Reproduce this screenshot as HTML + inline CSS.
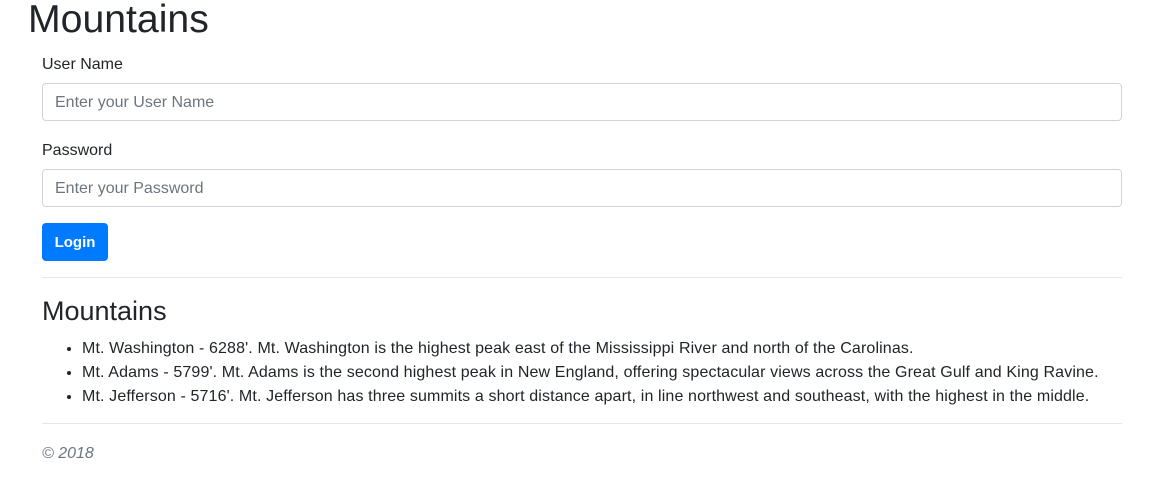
<!DOCTYPE html>
<html><head><style>
body{margin:0;font-family:"Liberation Sans",sans-serif;color:#212529;font-size:16px;line-height:24px;width:1166px;height:488px;overflow:hidden;background:#fff}
h1{position:absolute;left:28px;top:0;margin:0;font-size:39.2px;line-height:40px;font-weight:500}
.c{position:absolute;left:42px;width:1080px;top:51px}
label{display:block;height:24px;margin-bottom:8px;position:relative;top:2px}
.in{box-sizing:border-box;height:38px;border:1px solid #ced4da;border-radius:4px;padding:7px 12px 5px;color:#6c757d;line-height:24px;margin-bottom:16px}
.btn{display:inline-block;background:#007bff;color:#fff;border-radius:4px;height:38px;line-height:40px;padding:0 12px;box-sizing:border-box;width:66px;text-align:center;font-weight:bold;font-size:15px}
hr{border:0;border-top:1px solid rgba(0,0,0,.1);margin:0}
h2{font-size:27px;font-weight:500;margin:0;line-height:32px}
ul{margin:0;padding-left:40px;letter-spacing:0.13px}
.f{color:#6c757d;font-style:italic}
</style></head><body>
<h1>Mountains</h1>
<div class="c">
<label>User Name</label>
<div class="in">Enter your User Name</div>
<label>Password</label>
<div class="in">Enter your Password</div>
<div class="btn">Login</div>
<hr style="margin-top:16px">
<h2 style="margin-top:17px;margin-bottom:10px">Mountains</h2>
<ul>
<li>Mt. Washington - 6288'. Mt. Washington is the highest peak east of the Mississippi River and north of the Carolinas.</li>
<li>Mt. Adams - 5799'. Mt. Adams is the second highest peak in New England, offering spectacular views across the Great Gulf and King Ravine.</li>
<li>Mt. Jefferson - 5716'. Mt. Jefferson has three summits a short distance apart, in line northwest and southeast, with the highest in the middle.</li>
</ul>
<hr style="margin-top:14px">
<div class="f" style="margin-top:18px">© 2018</div>
</div>
</body></html>
